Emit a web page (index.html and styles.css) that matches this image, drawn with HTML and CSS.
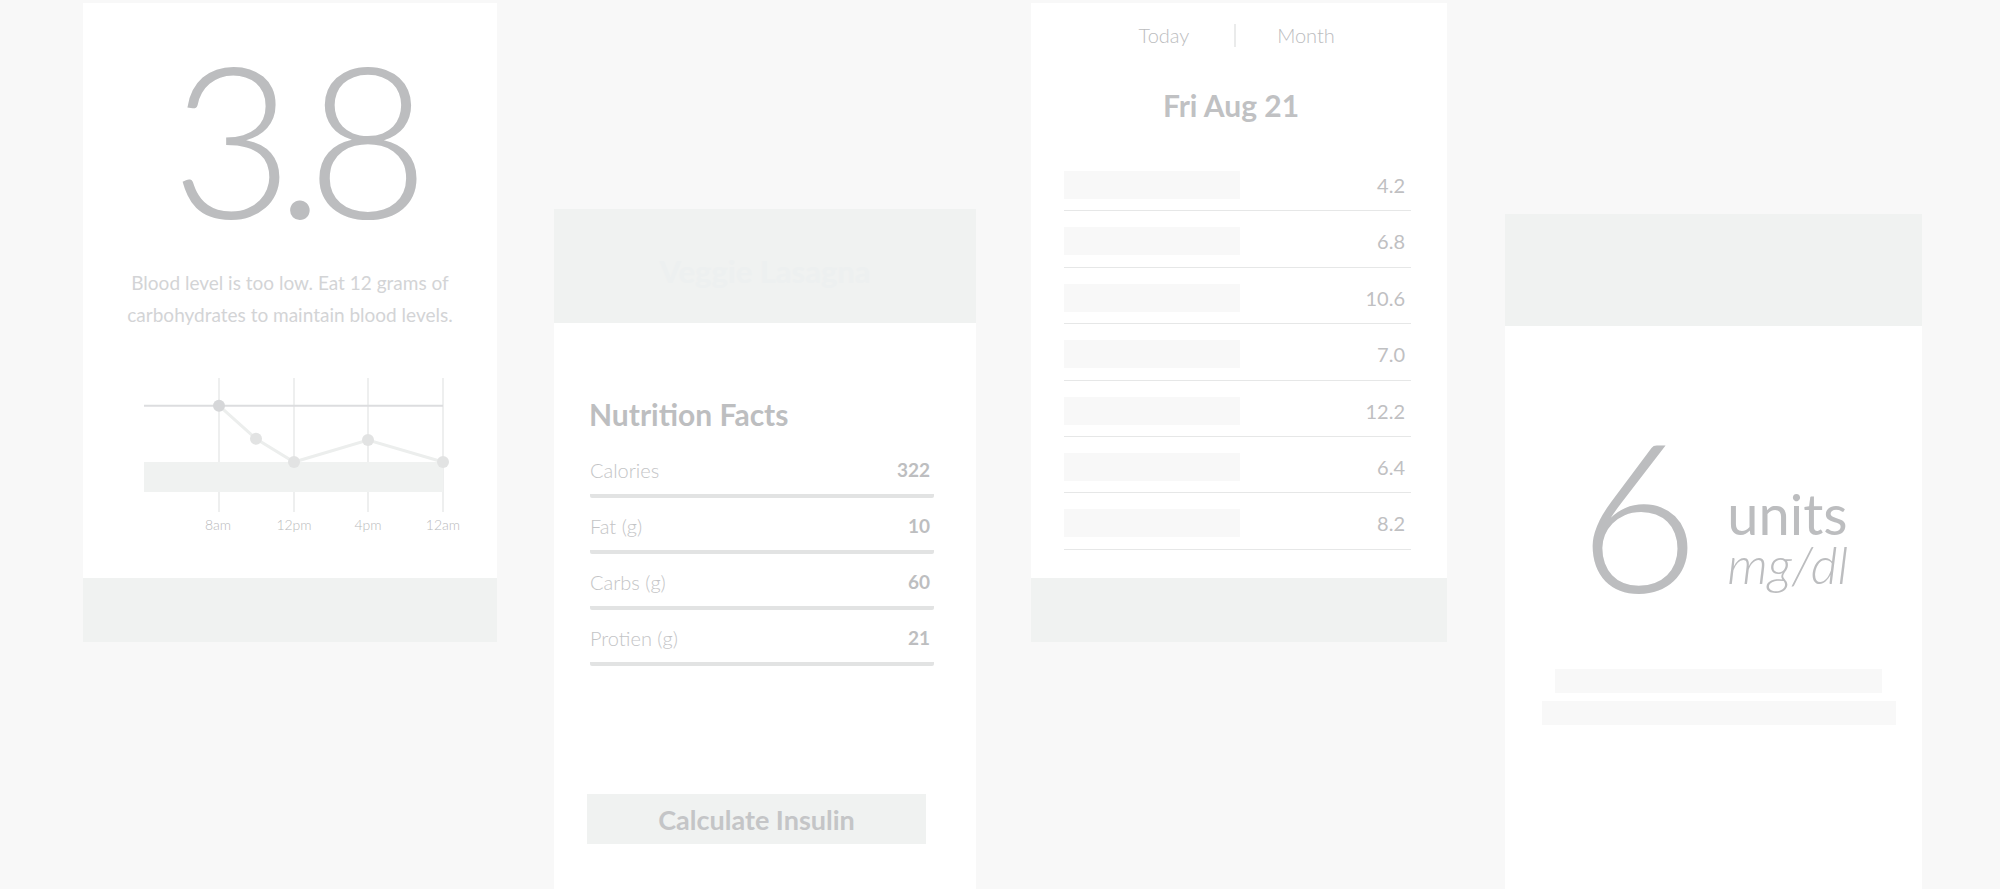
FILE: index.html
```html
<!DOCTYPE html>
<html lang="en">
<head>
<meta charset="utf-8">
<title>Diabetes app screens</title>
<link rel="stylesheet" href="styles.css">
</head>
<body>
<main class="board">

  <section class="panel panel-reading">
    <div class="reading">3.8</div>
    <p class="advice">Blood level is too low. Eat 12 grams of<br>carbohydrates to maintain blood levels.</p>
    <svg class="chart" width="340" height="168" viewBox="0 0 340 168">
      <line x1="75" y1="8" x2="75" y2="142" stroke="#eeefef" stroke-width="2"/>
      <line x1="150" y1="8" x2="150" y2="142" stroke="#eeefef" stroke-width="2"/>
      <line x1="224" y1="8" x2="224" y2="142" stroke="#eeefef" stroke-width="2"/>
      <line x1="299" y1="8" x2="299" y2="142" stroke="#eeefef" stroke-width="2"/>
      <rect x="0" y="92" width="299" height="30" fill="#f0f2f1"/>
      <line x1="0" y1="35.7" x2="299" y2="35.7" stroke="#dcdddf" stroke-width="2"/>
      <polyline points="75,35.7 112,68.7 150,92 224,70 299,92" fill="none" stroke="#eceeed" stroke-width="3"/>
      <circle cx="75" cy="35.7" r="6" fill="#d6d7d9"/>
      <circle cx="112" cy="68.7" r="6" fill="#e2e3e3"/>
      <circle cx="150" cy="92" r="6" fill="#e2e3e3"/>
      <circle cx="224" cy="70" r="6" fill="#e2e3e3"/>
      <circle cx="299" cy="92" r="6" fill="#e2e3e3"/>
      <g class="chart-labels" text-anchor="middle">
        <text x="74" y="160">8am</text>
        <text x="150" y="160">12pm</text>
        <text x="224" y="160">4pm</text>
        <text x="299" y="160">12am</text>
      </g>
    </svg>
    <div class="panel-footer"></div>
  </section>

  <section class="panel panel-meal">
    <header class="meal-header">Veggie Lasagna</header>
    <h2 class="facts-title">Nutrition Facts</h2>
    <ul class="facts">
      <li class="fact"><span class="fact-name">Calories</span><span class="fact-value">322</span></li>
      <li class="fact"><span class="fact-name">Fat (g)</span><span class="fact-value">10</span></li>
      <li class="fact"><span class="fact-name">Carbs (g)</span><span class="fact-value">60</span></li>
      <li class="fact"><span class="fact-name">Protien (g)</span><span class="fact-value">21</span></li>
    </ul>
    <button class="calc-btn" type="button">Calculate Insulin</button>
  </section>

  <section class="panel panel-log">
    <nav class="tabs">
      <span class="tab">Today</span>
      <span class="tab-sep"></span>
      <span class="tab">Month</span>
    </nav>
    <h2 class="log-date">Fri Aug 21</h2>
    <ul class="log">
      <li class="log-row"><span class="log-bar"></span><span class="log-value">4.2</span></li>
      <li class="log-row"><span class="log-bar"></span><span class="log-value">6.8</span></li>
      <li class="log-row"><span class="log-bar"></span><span class="log-value">10.6</span></li>
      <li class="log-row"><span class="log-bar"></span><span class="log-value">7.0</span></li>
      <li class="log-row"><span class="log-bar"></span><span class="log-value">12.2</span></li>
      <li class="log-row"><span class="log-bar"></span><span class="log-value">6.4</span></li>
      <li class="log-row"><span class="log-bar"></span><span class="log-value">8.2</span></li>
    </ul>
    <div class="panel-footer"></div>
  </section>

  <section class="panel panel-dose">
    <div class="dose-header"></div>
    <div class="dose">
      <span class="dose-num">6</span>
      <span class="dose-units">
        <span class="unit-main">units</span>
        <span class="unit-sub">mg/dl</span>
      </span>
    </div>
    <div class="dose-bar dose-bar-short"></div>
    <div class="dose-bar dose-bar-long"></div>
  </section>

</main>
</body>
</html>
```

FILE: styles.css
```css
* { box-sizing: border-box; }

html, body {
  margin: 0;
  padding: 0;
}

body {
  width: 2000px;
  height: 889px;
  overflow: hidden;
  background: #f8f8f8;
  font-family: Lato, "Open Sans", "Liberation Sans", sans-serif;
  color: #bdbec0;
}

.board {
  display: flex;
  align-items: flex-start;
  padding: 3px 0 0 83px;
}

.panel {
  background: #ffffff;
  display: flex;
  flex-direction: column;
  flex: none;
}

/* ---------- Panel 1 : reading ---------- */
.panel-reading {
  width: 414px;
  height: 639px;
  margin-right: 57px;
  align-items: center;
}

.reading {
  margin-top: 28px;
  padding-left: 2px;
  font-size: 211px;
  line-height: 211px;
  font-weight: 300;
  letter-spacing: -18px;
  color: #bcbdbf;
}

.advice {
  margin: 25px 0 0;
  font-size: 19px;
  line-height: 32px;
  font-weight: 400;
  color: #d3d4d6;
  text-align: center;
}

.chart {
  display: block;
  align-self: flex-start;
  margin: 39px 0 0 61px;
  overflow: visible;
}

.chart-labels {
  font-family: Lato, "Open Sans", sans-serif;
  font-size: 14px;
  font-weight: 300;
  fill: #b9babc;
}

.panel-footer {
  margin-top: auto;
  align-self: stretch;
  height: 64px;
  background: #f0f2f1;
}

/* ---------- Panel 2 : meal ---------- */
.panel-meal {
  width: 422px;
  height: 680px;
  margin-top: 206px;
  margin-right: 55px;
}

.meal-header {
  height: 114px;
  background: #f0f2f1;
  color: #edf0f0;
  font-size: 31px;
  font-weight: 700;
  text-align: center;
  padding-top: 44px;
  line-height: 36px;
}

.facts-title {
  margin: 73px 0 0 35px;
  font-size: 30px;
  line-height: 36px;
  font-weight: 700;
  color: #bdbec0;
}

.facts {
  list-style: none;
  margin: 10px 42px 0 36px;
  padding: 0;
}

.fact {
  display: flex;
  justify-content: space-between;
  padding: 16px 4px 12px 0;
  border-bottom: 4px solid #e2e3e3;
  border-radius: 0 0 2px 2px;
  line-height: 24px;
}

.fact-name {
  font-size: 20px;
  font-weight: 300;
  color: #c3c4c6;
}

.fact-value {
  font-size: 19px;
  font-weight: 700;
  color: #bdbec0;
}

.calc-btn {
  margin: 128px 0 0 33px;
  width: 339px;
  height: 50px;
  border: none;
  background: #f0f2f1;
  font-family: inherit;
  font-size: 27px;
  font-weight: 700;
  color: #c4c5c7;
  padding: 0;
  cursor: pointer;
}

/* ---------- Panel 3 : log ---------- */
.panel-log {
  width: 416px;
  height: 639px;
  margin-right: 58px;
}

.tabs {
  display: flex;
  justify-content: center;
  align-items: center;
  margin-top: 20px;
  height: 24px;
  padding-right: 8px;
}

.tab {
  width: 140px;
  text-align: center;
  font-size: 20px;
  line-height: 24px;
  font-weight: 300;
  color: #bbbcbe;
}

.tab-sep {
  width: 2px;
  height: 23px;
  background: #eaebeb;
}

.log-date {
  margin: 40px 0 0;
  padding-right: 16px;
  text-align: center;
  font-size: 30px;
  line-height: 36px;
  font-weight: 700;
  color: #c0c1c3;
}

.log {
  list-style: none;
  margin: 32px 36px 0 33px;
  padding: 0;
}

.log-row {
  display: flex;
  justify-content: space-between;
  align-items: center;
  padding: 16px 6px 11.4px 0;
  border-bottom: 1px solid #e6e7e7;
}

.log-bar {
  width: 176px;
  height: 28px;
  background: #f8f8f8;
}

.log-value {
  font-size: 20px;
  font-weight: 400;
  color: #bfc0c2;
}

/* ---------- Panel 4 : dose ---------- */
.panel-dose {
  width: 417px;
  height: 675px;
  margin-top: 211px;
}

.dose-header {
  height: 112px;
  background: #f0f2f1;
}

.dose {
  display: flex;
  justify-content: center;
  align-items: flex-end;
  margin-top: 82px;
}

.dose-num {
  font-size: 208px;
  line-height: 208px;
  font-weight: 300;
  color: #bcbdbf;
}

.dose-units {
  display: flex;
  flex-direction: column;
  margin-left: 28px;
  margin-bottom: 27px;
}

.unit-main {
  display: block;
  height: 50px;
  overflow: visible;
  font-size: 56px;
  line-height: 50px;
  font-weight: 400;
  color: #bcbdbf;
}

.unit-sub {
  display: block;
  height: 50px;
  font-size: 52px;
  line-height: 50px;
  font-weight: 300;
  font-style: italic;
  color: #bcbdbf;
}

.dose-bar {
  height: 24px;
  background: #f8f8f8;
}

.dose-bar-short {
  margin: 53px 0 0 50px;
  width: 327px;
}

.dose-bar-long {
  margin: 8px 0 0 37px;
  width: 354px;
}
```
